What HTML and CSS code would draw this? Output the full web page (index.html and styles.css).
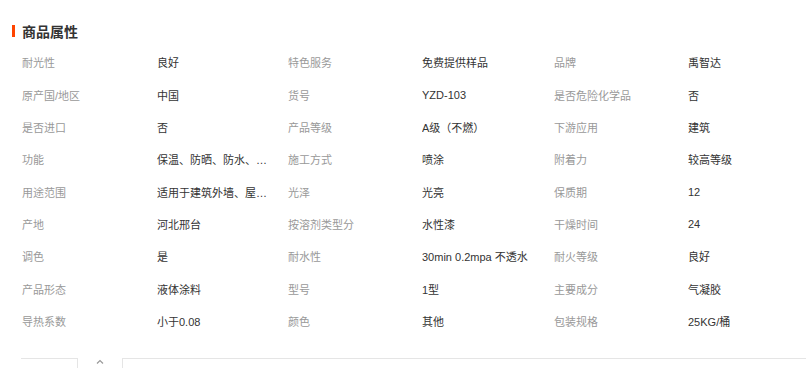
FILE: index.html
```html
<!DOCTYPE html>
<html lang="zh-CN">
<head>
<meta charset="utf-8">
<title>商品属性</title>
<link rel="stylesheet" href="styles.css">
</head>
<body>
<div class="page">
  <div class="section-head">
    <span class="bar"></span>
    <h2 class="title">商品属性</h2>
  </div>
  <div class="attrs">
    <div class="lbl">耐光性</div><div class="val">良好</div>
    <div class="lbl">特色服务</div><div class="val">免费提供样品</div>
    <div class="lbl">品牌</div><div class="val">禹智达</div>

    <div class="lbl">原产国/地区</div><div class="val">中国</div>
    <div class="lbl">货号</div><div class="val">YZD-103</div>
    <div class="lbl">是否危险化学品</div><div class="val">否</div>

    <div class="lbl">是否进口</div><div class="val">否</div>
    <div class="lbl">产品等级</div><div class="val">A级（不燃）</div>
    <div class="lbl">下游应用</div><div class="val">建筑</div>

    <div class="lbl">功能</div><div class="val">保温、防晒、防水、防火</div>
    <div class="lbl">施工方式</div><div class="val">喷涂</div>
    <div class="lbl">附着力</div><div class="val">较高等级</div>

    <div class="lbl">用途范围</div><div class="val">适用于建筑外墙、屋面、钢结构</div>
    <div class="lbl">光泽</div><div class="val">光亮</div>
    <div class="lbl">保质期</div><div class="val">12</div>

    <div class="lbl">产地</div><div class="val">河北邢台</div>
    <div class="lbl">按溶剂类型分</div><div class="val">水性漆</div>
    <div class="lbl">干燥时间</div><div class="val">24</div>

    <div class="lbl">调色</div><div class="val">是</div>
    <div class="lbl">耐水性</div><div class="val">30min 0.2mpa 不透水</div>
    <div class="lbl">耐火等级</div><div class="val">良好</div>

    <div class="lbl">产品形态</div><div class="val">液体涂料</div>
    <div class="lbl">型号</div><div class="val">1型</div>
    <div class="lbl">主要成分</div><div class="val">气凝胶</div>

    <div class="lbl">导热系数</div><div class="val">小于0.08</div>
    <div class="lbl">颜色</div><div class="val">其他</div>
    <div class="lbl">包装规格</div><div class="val">25KG/桶</div>
  </div>
  <div class="foot">
    <div class="tab-box"></div>
    <div class="caret">
      <svg width="8" height="5" viewBox="0 0 8 5"><path d="M1 4.5 L4 1.5 L7 4.5" fill="none" stroke="#999" stroke-width="1.2"/></svg>
    </div>
    <div class="panel"></div>
  </div>
</div>
</body>
</html>
```

FILE: styles.css
```css
html, body {
  margin: 0;
  padding: 0;
  background: #fff;
  overflow: hidden;
}
body {
  font-family: "Liberation Sans", Arial, "Noto Sans CJK SC", sans-serif;
  font-size: 11px;
  color: #333;
}
.page {
  width: 806px;
  height: 368px;
  overflow: hidden;
}
.section-head {
  display: flex;
  align-items: center;
  height: 20px;
  margin-top: 21px;
  padding-left: 12px;
}
.bar {
  width: 3px;
  height: 12px;
  background: #ff4400;
  margin-right: 7px;
}
.title {
  margin: 0;
  font-size: 14px;
  font-weight: bold;
  color: #333;
  font-family: "Noto Sans CJK SC", sans-serif;
  line-height: 20px;
}
.attrs {
  display: grid;
  grid-template-columns: 135px 131px 134px 132px 134px 112px;
  grid-auto-rows: 32.375px;
  margin-top: 5px;
  padding-left: 22px;
  align-items: center;
}
.lbl {
  color: #999;
  white-space: nowrap;
}
.val {
  color: #333;
  white-space: nowrap;
  overflow: hidden;
  text-overflow: ellipsis;
  max-width: 112px;
}
.foot {
  display: flex;
  margin-top: 21px;
  padding-left: 21px;
  height: 20px;
}
.tab-box {
  width: 56px;
  border-top: 1px solid #e5e5e5;
  border-right: 1px solid #e5e5e5;
}
.caret {
  width: 44px;
  display: flex;
  justify-content: center;
  padding-top: 1px;
}
.caret svg {
  display: block;
}
.panel {
  flex: 1;
  border-top: 1px solid #e5e5e5;
  border-left: 1px solid #e5e5e5;
}
```
